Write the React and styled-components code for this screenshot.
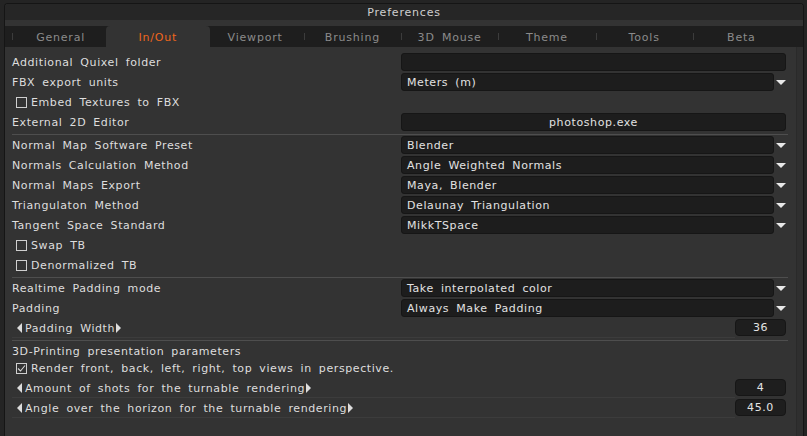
import styled, { createGlobalStyle } from 'styled-components'

const GlobalStyle = createGlobalStyle`
  html, body {
    margin: 0;
    padding: 0;
    background: #242424;
    height: 100%;
    overflow: hidden;
  }
  body {
    font-family: "DejaVu Sans", "Liberation Sans", sans-serif;
    font-size: 11px;
    letter-spacing: 0.6px;
    word-spacing: 3px;
    color: #dedede;
  }
`

const Window = styled.div`
  margin: 3px 3px 0 4px;
  height: 433px;
  display: flex;
  flex-direction: column;
  border-left: 1px solid #151515;
  border-right: 1px solid #151515;
  border-top: 1px solid #151515;
  border-radius: 4px 4px 0 0;
  overflow: hidden;
  background: #333;
`

const TitleBar = styled.div`
  height: 16px;
  background: #262626;
  color: #cfcfcf;
  display: flex;
  align-items: center;
  justify-content: center;
  letter-spacing: 0.8px;
`

const Gap = styled.div`
  height: 6px;
  background: #333;
`

const TabBar = styled.div`
  height: 21px;
  background: #1e1e1e;
  display: grid;
  grid-template-columns: repeat(8, 1fr);
  padding: 0 13px 0 7px;
`

const Tab = styled.div`
  position: relative;
  display: flex;
  align-items: center;
  justify-content: center;
  padding-top: 1px;
  letter-spacing: 0.8px;
  color: ${p => (p.$active ? '#f0661c' : '#8b8b8b')};
  background: ${p => (p.$active ? '#333' : 'transparent')};
  border-radius: 4px 4px 0 0;
  margin: ${p => (p.$active ? '0 -3px' : '0')};
  &::before {
    content: '';
    display: ${p => (p.$tick ? 'block' : 'none')};
    position: absolute;
    left: 0;
    top: 7px;
    width: 1px;
    height: 7px;
    background: #3c3c3c;
  }
`

const Body = styled.div`
  flex: 1;
  display: flex;
`

const Content = styled.div`
  flex: 1;
  padding: 5px 8px 0 7px;
  display: flex;
  flex-direction: column;
`

const ScrollStrip = styled.div`
  width: 6px;
  background: #2f2f2f;
  border-left: 1px solid #2a2a2a;
`

const Row = styled.div`
  height: 20px;
  display: grid;
  grid-template-columns: 389px 1fr;
  align-items: center;
`

const Label = styled.div`
  white-space: nowrap;
`

const Heading = styled.div`
  height: 17px;
  display: flex;
  align-items: center;
  padding-top: 3px;
  box-sizing: border-box;
`

const Field = styled.div`
  height: 16px;
  margin-right: 2px;
  background: #1d1d1d;
  border: 1px solid #161616;
  border-radius: 3px;
  display: flex;
  align-items: center;
  justify-content: ${p => (p.$center ? 'center' : 'flex-start')};
  padding-left: ${p => (p.$center ? '0' : '5px')};
  color: #e2e2e2;
  white-space: nowrap;
`

const SelectWrap = styled.div`
  display: grid;
  grid-template-columns: 1fr 14px;
  align-items: center;
`

const SelectBox = styled(Field)`
  margin-right: 0;
`

const Arrow = styled.div`
  justify-self: center;
  width: 0;
  height: 0;
  border-left: 5px solid transparent;
  border-right: 5px solid transparent;
  border-top: 5px solid #e8e8e8;
`

const Separator = styled.div`
  height: 1px;
  background: #4e4e4e;
  margin: 2px 0 0;
`

const CheckRow = styled.div`
  height: 20px;
  display: flex;
  align-items: center;
  gap: 4px;
  padding-left: 4px;
`

const Box = styled.div`
  width: 9px;
  height: 9px;
  border: 1px solid #cfcfcf;
  display: flex;
  align-items: center;
  justify-content: center;
`

const SliderRow = styled.div`
  height: 20px;
  display: grid;
  grid-template-columns: 1fr 53px;
`

const SliderLabel = styled.div`
  display: flex;
  align-items: center;
  padding: 1px 0 0 4px;
  border-bottom: 1px solid #3c3c3c;
`

const Tri = styled.span`
  width: 0;
  height: 0;
  border-top: 5px solid transparent;
  border-bottom: 5px solid transparent;
  ${p => (p.$right ? 'border-left: 5px solid #dcdcdc;' : 'border-right: 5px solid #dcdcdc;')}
  margin: ${p => (p.$right ? '0 0 0 1px' : '0 3px 0 1px')};
`

const ValueBox = styled.div`
  margin: 1px 2px 2px 0;
  background: #1e1e1e;
  border: 1px solid #161616;
  border-radius: 4px;
  display: flex;
  align-items: center;
  justify-content: center;
  color: #e4e4e4;
`

const tabs = ['General', 'In/Out', 'Viewport', 'Brushing', '3D Mouse', 'Theme', 'Tools', 'Beta']
const activeTab = 1

const Select = ({ value }) => (
  <SelectWrap>
    <SelectBox>{value}</SelectBox>
    <Arrow />
  </SelectWrap>
)

const Check = ({ checked, children }) => (
  <CheckRow>
    <Box>
      {checked && (
        <svg width="9" height="9" viewBox="0 0 9 9">
          <polyline points="1,4.5 3.5,7 8,1.5" fill="none" stroke="#d8d8d8" strokeWidth="1.1" />
        </svg>
      )}
    </Box>
    <span>{children}</span>
  </CheckRow>
)

const Slider = ({ label, value }) => (
  <SliderRow>
    <SliderLabel>
      <Tri />
      {label}
      <Tri $right />
    </SliderLabel>
    <ValueBox>{value}</ValueBox>
  </SliderRow>
)

const selects = [
  ['Normal Map Software Preset', 'Blender'],
  ['Normals Calculation Method', 'Angle Weighted Normals'],
  ['Normal Maps Export', 'Maya, Blender'],
  ['Triangulaton Method', 'Delaunay Triangulation'],
  ['Tangent Space Standard', 'MikkTSpace'],
]

export default function App() {
  return (
    <>
      <GlobalStyle />
      <Window>
        <TitleBar>Preferences</TitleBar>
        <Gap />
        <TabBar>
          {tabs.map((t, i) => (
            <Tab key={t} $active={i === activeTab} $tick={i !== activeTab && i !== activeTab + 1}>
              {t}
            </Tab>
          ))}
        </TabBar>
        <Body>
          <Content>
            <Row>
              <Label>Additional Quixel folder</Label>
              <Field />
            </Row>
            <Row>
              <Label>FBX export units</Label>
              <Select value="Meters (m)" />
            </Row>
            <Check>Embed Textures to FBX</Check>
            <Row>
              <Label>External 2D Editor</Label>
              <Field $center>photoshop.exe</Field>
            </Row>
            <Separator />
            {selects.map(([l, v]) => (
              <Row key={l}>
                <Label>{l}</Label>
                <Select value={v} />
              </Row>
            ))}
            <Check>Swap TB</Check>
            <Check>Denormalized TB</Check>
            <Separator />
            <Row>
              <Label>Realtime Padding mode</Label>
              <Select value="Take interpolated color" />
            </Row>
            <Row>
              <Label>Padding</Label>
              <Select value="Always Make Padding" />
            </Row>
            <Slider label="Padding Width" value="36" />
            <Separator />
            <Heading>3D-Printing presentation parameters</Heading>
            <Check checked>Render front, back, left, right, top views in perspective.</Check>
            <Slider label="Amount of shots for the turnable rendering" value="4" />
            <Slider label="Angle over the horizon for the turnable rendering" value="45.0" />
          </Content>
          <ScrollStrip />
        </Body>
      </Window>
    </>
  )
}
